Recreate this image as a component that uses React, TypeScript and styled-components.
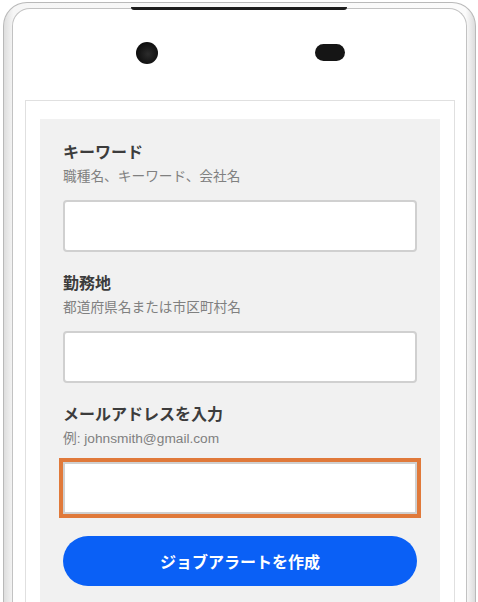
import styled, { createGlobalStyle } from "styled-components";

const GlobalStyle = createGlobalStyle`
  html, body {
    margin: 0;
    padding: 0;
    background: #ffffff;
    overflow: hidden;
  }
  * {
    box-sizing: border-box;
  }
`;

const Device = styled.div`
  position: relative;
  width: 473px;
  height: 610px;
  margin: 2px 0 0 3px;
  padding: 5px 8px 0;
  border: 1.5px solid #b9b9b9;
  border-bottom: none;
  border-radius: 24px 24px 0 0;
  background: linear-gradient(to right, #dedede, #f6f6f6 2%, #fbfbfb 98%, #dcdcdc);
`;

const Notch = styled.div`
  position: absolute;
  top: 4px;
  left: 127px;
  width: 216px;
  height: 3px;
  border-radius: 0 0 6px 6px;
  background: #1c1c1c;
`;

const Bezel = styled.div`
  height: 100%;
  display: flex;
  flex-direction: column;
  border: 1.5px solid #c2c2c2;
  border-bottom: none;
  border-radius: 18px 18px 0 0;
  background: #ffffff;
`;

const Sensors = styled.div`
  height: 91px;
  flex-shrink: 0;
  display: flex;
  align-items: center;
  padding: 0 0 4px 123px;
  gap: 157px;
`;

const Camera = styled.div`
  width: 22px;
  height: 22px;
  border-radius: 50%;
  background: radial-gradient(circle at 55% 55%, #2c2c2c, #0d0d0d 70%);
`;

const Speaker = styled.div`
  width: 30px;
  height: 17px;
  border-radius: 9px;
  background: #151515;
`;

const Screen = styled.div`
  flex: 1;
  margin: 0 11px 0 12px;
  padding: 18px 14px 0;
  border: 1px solid #e0e0e0;
  border-bottom: none;
  background: #ffffff;
`;

const Panel = styled.form`
  height: 100%;
  background: #f1f1f1;
  padding: 24px 23px 0;
  display: flex;
  flex-direction: column;
  gap: 22px;
  font-family: "Liberation Sans", "Noto Sans CJK JP", sans-serif;
`;

const Field = styled.label`
  display: flex;
  flex-direction: column;
`;

const Label = styled.span`
  font-size: 16px;
  line-height: 20px;
  font-weight: 700;
  color: #3c3c3c;
`;

const Hint = styled.span`
  margin-top: 4px;
  font-size: 13.7px;
  line-height: 20px;
  color: #808080;
`;

const Input = styled.input<{ $focused?: boolean }>`
  margin-top: 13px;
  width: 100%;
  height: 52px;
  border: 2px solid #d0d0d0;
  border-radius: ${(p) => (p.$focused ? "0" : "4px")};
  background: #ffffff;
  outline: ${(p) => (p.$focused ? "4px solid #e0793a" : "none")};
  font-size: 15px;
`;

const Submit = styled.button`
  height: 50px;
  border: none;
  border-radius: 25px;
  background: #0a60f6;
  color: #ffffff;
  font-family: inherit;
  font-size: 16px;
  font-weight: 700;
  cursor: pointer;
`;

const fields = [
  { label: "キーワード", hint: "職種名、キーワード、会社名" },
  { label: "勤務地", hint: "都道府県名または市区町村名" },
  { label: "メールアドレスを入力", hint: "例: johnsmith@gmail.com", focused: true },
];

export default function App() {
  return (
    <>
      <GlobalStyle />
      <Device>
        <Notch />
        <Bezel>
          <Sensors>
            <Camera />
            <Speaker />
          </Sensors>
          <Screen>
            <Panel onSubmit={(e) => e.preventDefault()}>
              {fields.map((f) => (
                <Field key={f.label}>
                  <Label>{f.label}</Label>
                  <Hint>{f.hint}</Hint>
                  <Input type="text" $focused={f.focused} />
                </Field>
              ))}
              <Submit type="submit">ジョブアラートを作成</Submit>
            </Panel>
          </Screen>
        </Bezel>
      </Device>
    </>
  );
}
